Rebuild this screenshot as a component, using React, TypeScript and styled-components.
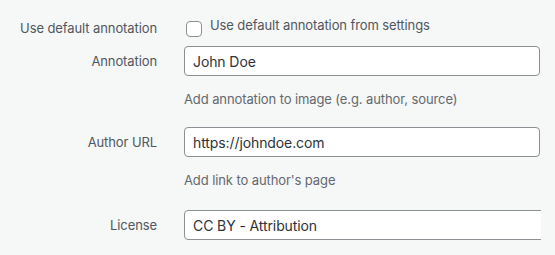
import styled, { createGlobalStyle } from 'styled-components';

const GlobalStyle = createGlobalStyle`
    html, body {
        margin: 0;
        padding: 0;
        background: #f6f7f7;
    }
    body {
        font-family: Inter, 'Noto Sans', 'Liberation Sans', sans-serif;
        letter-spacing: -0.1px;
        -webkit-font-smoothing: antialiased;
    }
`;

const Form = styled.div`
    width: 555px;
    height: 255px;
    padding-top: 19px;
    box-sizing: border-box;
    overflow: hidden;
`;

const Row = styled.div<{ $gap?: number }>`
    display: grid;
    grid-template-columns: 157px 356px;
    column-gap: 27px;
    align-items: start;
    margin-bottom: ${(p) => p.$gap ?? 0}px;
`;

const Label = styled.label<{ $tall?: boolean }>`
    text-align: right;
    font-size: 13px;
    color: #50575e;
    line-height: ${(p) => (p.$tall ? '30px' : '18px')};
    white-space: nowrap;
`;

const Field = styled.div`
    display: flex;
    flex-direction: column;
`;

const CheckLine = styled.label`
    display: flex;
    align-items: flex-start;
    gap: 8px;
    font-size: 13px;
    color: #50575e;
    line-height: 18px;
`;

const Checkbox = styled.input`
    appearance: none;
    margin: 2px 0 0 2px;
    width: 16px;
    height: 16px;
    border: 1px solid #8c8f94;
    border-radius: 4px;
    background: #fff;
    box-sizing: border-box;
    flex-shrink: 0;
`;

const CheckText = styled.span`
    margin-top: -3px;
`;

const TextInput = styled.input`
    width: 356px;
    height: 30px;
    box-sizing: border-box;
    border: 1px solid #8c8f94;
    border-radius: 4px;
    background: #fff;
    padding: 0 8px;
    font-family: inherit;
    letter-spacing: inherit;
    font-size: 14px;
    color: #2c3338;
    outline: none;
`;

const Help = styled.p`
    margin: 14px 0 0;
    font-size: 13px;
    line-height: 18px;
    color: #646970;
`;

const SelectClip = styled.div`
    width: 357px;
    overflow: hidden;
`;

const Select = styled.select`
    appearance: none;
    width: 420px;
    height: 30px;
    box-sizing: border-box;
    border: 1px solid #8c8f94;
    border-radius: 4px;
    background: #fff;
    padding: 0 8px;
    font-family: inherit;
    letter-spacing: inherit;
    font-size: 14px;
    color: #2c3338;
    outline: none;
`;

const App = () => {
    return (
        <>
            <GlobalStyle />
            <Form>
                <Row $gap={9}>
                    <Label>Use default annotation</Label>
                    <CheckLine>
                        <Checkbox type="checkbox" />
                        <CheckText>Use default annotation from settings</CheckText>
                    </CheckLine>
                </Row>
                <Row $gap={19}>
                    <Label $tall>Annotation</Label>
                    <Field>
                        <TextInput defaultValue="John Doe" />
                        <Help>Add annotation to image (e.g. author, source)</Help>
                    </Field>
                </Row>
                <Row $gap={21}>
                    <Label $tall>Author URL</Label>
                    <Field>
                        <TextInput defaultValue="https://johndoe.com" />
                        <Help>Add link to author's page</Help>
                    </Field>
                </Row>
                <Row>
                    <Label $tall>License</Label>
                    <SelectClip>
                        <Select defaultValue="cc-by">
                            <option value="cc-by">CC BY - Attribution</option>
                        </Select>
                    </SelectClip>
                </Row>
            </Form>
        </>
    );
};

export default App;
